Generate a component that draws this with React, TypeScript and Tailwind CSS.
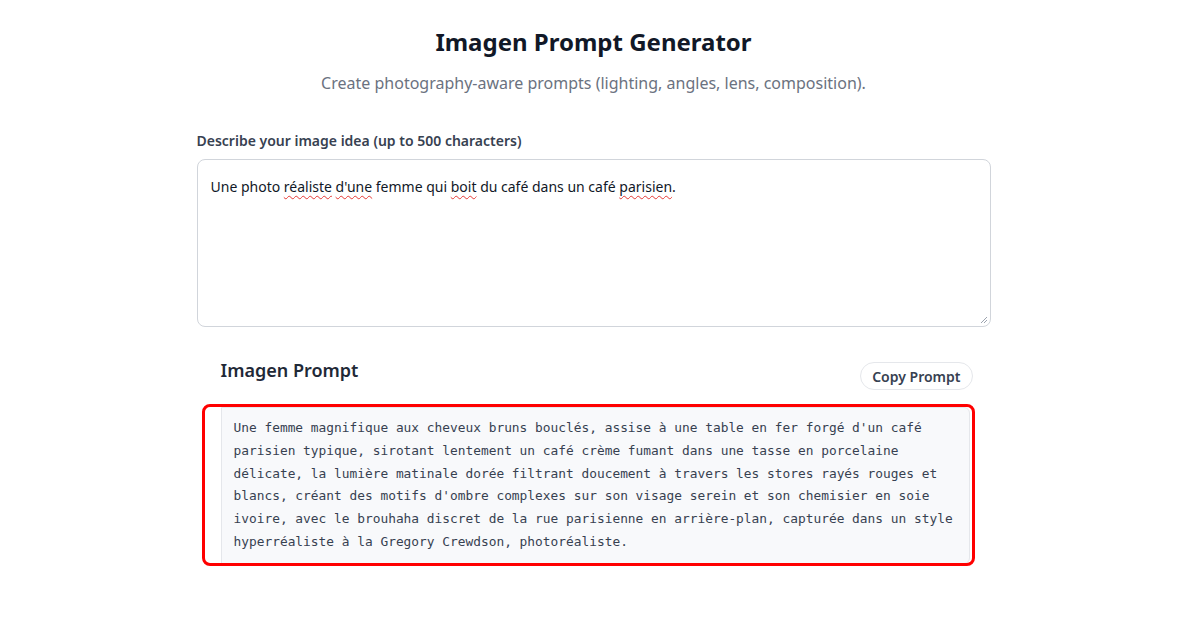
import React from "react";

const PROMPT_LINES = [
  "Une femme magnifique aux cheveux bruns bouclés, assise à une table en fer forgé d'un café",
  "parisien typique, sirotant lentement un café crème fumant dans une tasse en porcelaine",
  "délicate, la lumière matinale dorée filtrant doucement à travers les stores rayés rouges et",
  "blancs, créant des motifs d'ombre complexes sur son visage serein et son chemisier en soie",
  "ivoire, avec le brouhaha discret de la rue parisienne en arrière-plan, capturée dans un style",
  "hyperréaliste à la Gregory Crewdson, photoréaliste.",
];

function Typo({ children }: { children: React.ReactNode }) {
  return (
    <span className="underline decoration-wavy decoration-[#e53935] decoration-1 underline-offset-[3px]">
      {children}
    </span>
  );
}

export default function App() {
  return (
    <div className="min-h-[628px] bg-white pr-[13px] font-['Noto_Sans',sans-serif]">
      <div className="mx-auto w-[794px] pt-[24px]">
        <h1 className="text-center text-[24px] font-bold leading-[36px] text-[#111827]">
          Imagen Prompt Generator
        </h1>
        <p className="mt-[11px] text-center text-[16px] leading-[24px] text-[#6b7280]">
          Create photography-aware prompts (lighting, angles, lens, composition).
        </p>

        <label className="mt-[36px] block text-[14px] font-semibold leading-[20px] text-[#374151]">
          Describe your image idea (up to 500 characters)
        </label>
        <div className="relative mt-[8px] h-[168px] rounded-lg border border-[#d1d5db] bg-white px-[13px] py-[17px] text-[14px] leading-[20px] text-[#111827]">
          Une photo <Typo>réaliste</Typo> <Typo>d'une</Typo> femme qui <Typo>boit</Typo> du café dans un café{" "}
          <Typo>parisien</Typo>.
          <svg
            className="absolute bottom-[2px] right-[2px]"
            width="9"
            height="9"
            viewBox="0 0 9 9"
          >
            <path d="M8 2 L2 8 M8 5 L5 8" stroke="#9ca3af" strokeWidth="1" />
          </svg>
        </div>

        <section className="mt-[31px] pl-[24px] pr-[18px]">
          <div className="flex items-start justify-between">
            <h2 className="text-[18px] font-semibold leading-[24px] text-[#1f2937]">
              Imagen Prompt
            </h2>
            <button className="mt-[4px] h-[28px] rounded-full border border-[#e5e7eb] bg-white px-[11px] text-[14px] font-semibold text-[#374151]">
              Copy Prompt
            </button>
          </div>

          <div className="relative mt-[17px] mr-[3px]">
            <pre className="whitespace-pre rounded-r-md border border-[#e5e7eb] bg-[#f8f9fb] px-[12px] py-[9px] font-['DejaVu_Sans_Mono',monospace] text-[12.85px] leading-[22.75px] text-[#374151]">
              {PROMPT_LINES.join("\n")}
            </pre>
            <div className="pointer-events-none absolute -top-[3px] -bottom-[2px] -left-[19px] -right-[5px] rounded-[8px] border-[3px] border-[#ff0000]" />
          </div>
        </section>
      </div>
    </div>
  );
}
